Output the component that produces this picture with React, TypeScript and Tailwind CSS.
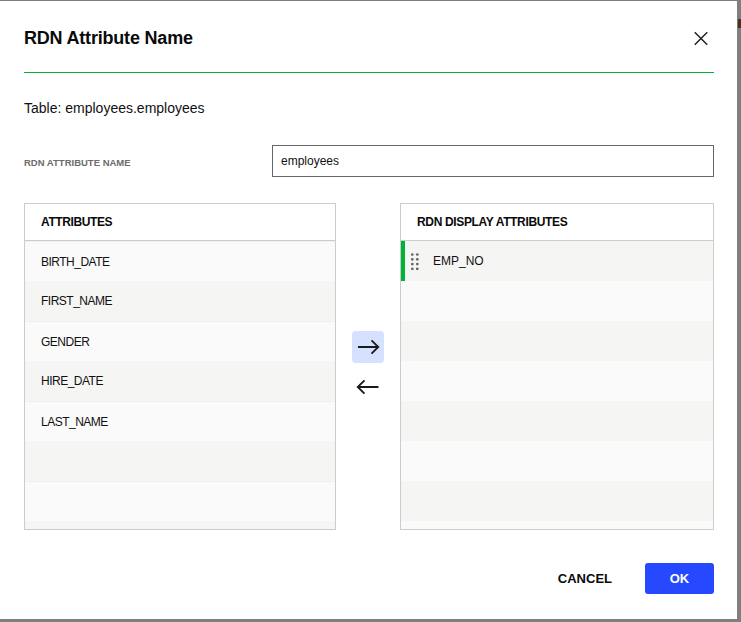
import React from "react";

const leftRows = ["BIRTH_DATE", "FIRST_NAME", "GENDER", "HIRE_DATE", "LAST_NAME", "", "", ""];

function Handle() {
  const xs = [1.3, 6.3];
  const ys = [1.5, 6.3, 11.1, 15.9];
  return (
    <svg width="8" height="17" viewBox="0 0 8 17" className="shrink-0">
      {xs.map((x) =>
        ys.map((y) => <circle key={`${x}-${y}`} cx={x} cy={y} r="1.35" fill="#666" />)
      )}
    </svg>
  );
}

export default function App() {
  return (
    <div
      className="w-[741px] h-[622px] bg-[#7f7f7f] pt-px flex items-start"
      style={{ fontFamily: '"Liberation Sans", Arial, sans-serif' }}
    >
      <div className="w-[737px] h-[618px] bg-white flex flex-col pl-[24px] pr-[23px] text-[#111]">
        {/* Header */}
        <div className="mt-[13px] h-[48px] flex items-center justify-between">
          <h1 className="text-[18px] leading-[24px] font-bold tracking-[-0.2px] text-[#0a0a0a]">
            RDN Attribute Name
          </h1>
          <button className="mr-[6px] w-[14px] h-[14px] flex items-center justify-center">
            <svg width="15" height="15" viewBox="0 0 15 15">
              <path d="M0.8 0.8L14.2 14.2M14.2 0.8L0.8 14.2" stroke="#222" strokeWidth="1.6" fill="none" />
            </svg>
          </button>
        </div>
        <div className="mt-[10px] h-px bg-[#00b336]" />

        <div className="mt-[25px] text-[14px] leading-[20px]">Table: employees.employees</div>

        {/* Name row */}
        <div className="mt-[27px] h-[32px] flex items-center">
          <div className="w-[248px] pt-[4px] text-[9.5px] font-bold text-[#6b6b6b]">RDN ATTRIBUTE NAME</div>
          <input
            readOnly
            value="employees"
            className="w-[442px] h-[32px] border border-[#666] px-[8px] text-[12px] text-[#111] outline-none"
            style={{ fontFamily: '"Liberation Sans", Arial, sans-serif' }}
          />
        </div>

        {/* Panels */}
        <div className="mt-[26px] h-[327px] flex">
          <div className="w-[312px] h-full border border-[#cccccc] flex flex-col overflow-hidden">
            <div className="h-[37px] shrink-0 border-b border-[#cccccc] flex items-center pl-[16px] text-[12px] font-bold tracking-[-0.4px] text-[#0a0a0a] bg-white">
              ATTRIBUTES
            </div>
            {leftRows.map((r, i) => (
              <div
                key={i}
                className={
                  i % 2 === 0
                    ? "h-[40px] shrink-0 flex items-center pl-[16px] text-[12px] tracking-[-0.5px] bg-[#fafafa] border-t border-[#eef1f4]"
                    : "h-[40px] shrink-0 flex items-center pl-[16px] text-[12px] tracking-[-0.5px] bg-[#f5f5f4]"
                }
              >
                {r}
              </div>
            ))}
          </div>

          <div className="w-[64px] flex flex-col items-center justify-center gap-[8px]">
            <button className="w-[32px] h-[32px] rounded-[4px] bg-[#d6e0ff] flex items-center justify-center">
              <svg width="32" height="32" viewBox="0 0 32 32">
                <path d="M6 16h20.5M19.5 9.3L26.3 16l-6.8 6.7" stroke="#1a1a1a" strokeWidth="1.8" fill="none" />
              </svg>
            </button>
            <button className="w-[32px] h-[32px] rounded-[4px] flex items-center justify-center">
              <svg width="32" height="32" viewBox="0 0 32 32">
                <path d="M26.5 16H6M12.5 9.3L5.7 16l6.8 6.7" stroke="#1a1a1a" strokeWidth="1.8" fill="none" />
              </svg>
            </button>
          </div>

          <div className="w-[314px] h-full border border-[#cccccc] flex flex-col overflow-hidden">
            <div className="h-[37px] shrink-0 border-b border-[#cccccc] flex items-center pl-[16px] text-[12px] font-bold tracking-[-0.35px] text-[#0a0a0a] bg-white">
              RDN DISPLAY ATTRIBUTES
            </div>
            <div className="h-[40px] shrink-0 flex items-center border-l-[4px] border-[#00b336] pl-[6px] bg-[#f5f5f4]">
              <Handle />
              <span className="ml-[14px] text-[12px]">EMP_NO</span>
            </div>
            {[1, 2, 3, 4, 5, 6, 7].map((i) => (
              <div
                key={i}
                className={i % 2 === 1 ? "h-[40px] shrink-0 bg-[#fafafa]" : "h-[40px] shrink-0 bg-[#f5f5f4]"}
              />
            ))}
          </div>
        </div>

        {/* Footer */}
        <div className="mt-[33px] h-[31px] flex items-center justify-end">
          <button className="mr-[33px] text-[13px] font-bold text-[#0a0a0a]">CANCEL</button>
          <button className="w-[69px] h-[31px] rounded-[3px] bg-[#2648ff] text-white text-[13px] font-bold">
            OK
          </button>
        </div>
      </div>
      <div className="w-[4px] flex flex-col">
        <div className="mt-[18px] ml-[1px] w-[3px] h-[9px] bg-[#4a3020]" />
      </div>
    </div>
  );
}
